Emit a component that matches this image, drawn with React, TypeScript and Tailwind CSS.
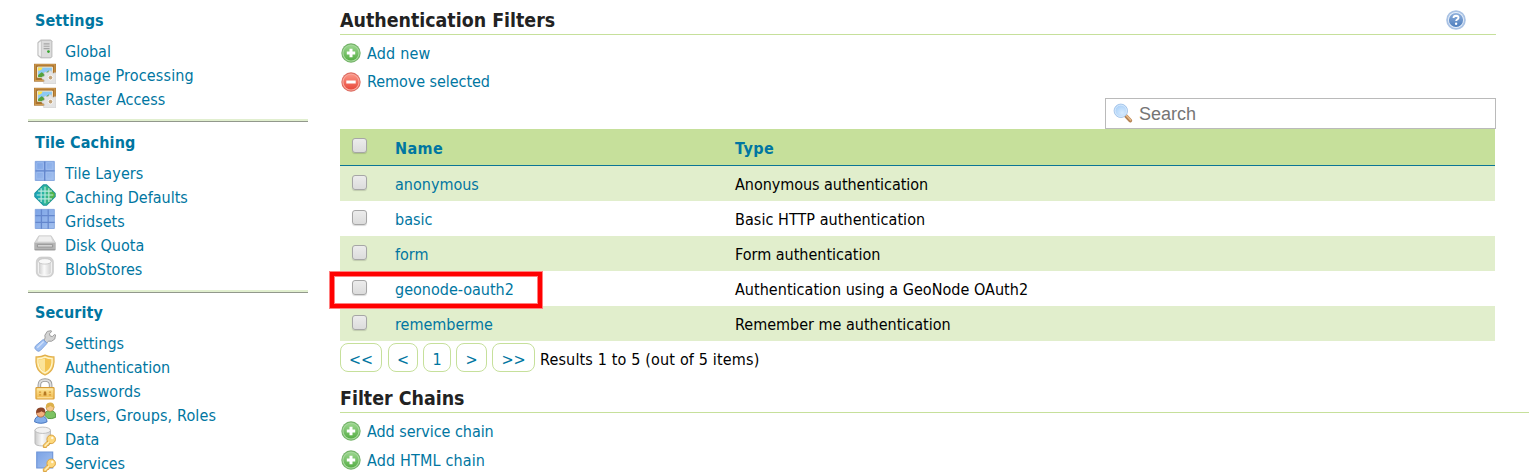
import React from "react";

type IconName =
  | "server" | "picture" | "tiles" | "cache" | "grid" | "disk" | "database"
  | "wrench" | "shield" | "lock" | "group" | "dataKey" | "serviceKey";

const Defs = () => (
  <svg width="0" height="0" className="absolute" aria-hidden="true">
    <defs>
      <linearGradient id="metal" x1="0" x2="1" y1="0" y2="0">
        <stop offset="0" stopColor="#c9c9c9" /><stop offset=".45" stopColor="#fafafa" /><stop offset="1" stopColor="#cfcfcf" />
      </linearGradient>
      <linearGradient id="blue" x1="0" x2="1" y1="0" y2="1">
        <stop offset="0" stopColor="#7ba3e6" /><stop offset="1" stopColor="#a3c0ee" />
      </linearGradient>
      <linearGradient id="gold" x1="0" x2="0" y1="0" y2="1">
        <stop offset="0" stopColor="#fde79b" /><stop offset="1" stopColor="#f0b84b" />
      </linearGradient>
      <linearGradient id="teal" x1="0" x2="1" y1="0" y2="0">
        <stop offset="0" stopColor="#17a3c0" /><stop offset=".5" stopColor="#2eb89c" /><stop offset="1" stopColor="#62b52c" />
      </linearGradient>
      <linearGradient id="green" x1="0" x2="0" y1="0" y2="1">
        <stop offset="0" stopColor="#9ad68d" /><stop offset="1" stopColor="#56ae45" />
      </linearGradient>
      <linearGradient id="red" x1="0" x2="0" y1="0" y2="1">
        <stop offset="0" stopColor="#fb9484" /><stop offset="1" stopColor="#e8493c" />
      </linearGradient>
      <linearGradient id="help" x1="0" x2="0" y1="0" y2="1">
        <stop offset="0" stopColor="#8fb0dc" /><stop offset="1" stopColor="#4c7dbd" />
      </linearGradient>
      <radialGradient id="lens" cx=".6" cy=".65" r=".6">
        <stop offset="0" stopColor="#d6ebff" /><stop offset="1" stopColor="#acd1f7" />
      </radialGradient>
    </defs>
  </svg>
);

const Key = () => (
  <g>
    <path d="M10.400 10.300 6.800 13.900v1.700h2.300l.5-1.300 1.200-.2.3-1.300 1.700-.6z" fill="#fbd57a" stroke="#d9a03c" strokeWidth=".7" strokeLinejoin="round" />
    <circle cx="12.500" cy="9.700" r="3.100" fill="#fdd87c" stroke="#d9a03c" strokeWidth=".7" />
    <path d="m8 14.600 3-3" stroke="#fff0c0" strokeWidth=".8" />
    <circle cx="13.300" cy="8.800" r=".9" fill="#fff8e4" />
  </g>
);

const drawings: Record<IconName, React.ReactNode> = {
  server: (
    <>
      <path d="M2.800 3.200 5 1.400h7.200l.9.900v11.300l-.9.900H5l-2.200-1.700z" fill="#c3c3c3" stroke="#b0b0b0" strokeWidth=".5" />
      <path d="M5.600 2h6.400q.6 0 .6.600v10.900q0 .5-.6.500H5.600z" fill="#dcdcdc" />
      <path d="M3.300 3.600 5 2.400v11.200l-1.700-1.200z" fill="#f4f4f4" />
      <path d="M7 4.200h4.300M7 6h4.300M7 7.800h4.300" stroke="#a5a5a5" strokeWidth=".9" />
      <circle cx="10.500" cy="9.900" r="1" fill="#35a52e" />
    </>
  ),
  picture: (
    <>
      <path d="M0 1.300h16v13H0z" fill="#a8722f" />
      <path d="M.8 2h14.400v11.500H.8z" fill="none" stroke="#d29d51" strokeWidth=".8" />
      <path d="M2.600 3.700h10.800v7.500H2.600z" fill="#8cc9f4" stroke="#f8efd9" strokeWidth=".7" />
      <path d="M3 4h3.200q-.2 2-3.200 2.400z" fill="#ffe34a" />
      <path d="M3 9.400 5.500 7.500 8 8.800 10.500 6.200 13 8v3H3z" fill="#55a23c" />
      <path d="M11.200 6.400h1.600l.4 1.400 1 .4 1.300-.6.5.6v7.400l-.8.4-8-.1-.4-.8.8-1.300-.3-.9-1.500-.5v-1.500l1.500-.5.4-1-.7-1.300 1.100-1 1.300.7 1-.4z" fill="#e4e4e4" stroke="#c6c6c6" strokeWidth=".4" />
      <circle cx="12" cy="11.400" r="1.700" fill="#c4a479" stroke="#fafafa" strokeWidth=".7" />
    </>
  ),
  tiles: (
    <>
      <path d="M.9 1h13.900v13.900H.9z" fill="url(#blue)" stroke="#7c9fdc" strokeWidth=".6" />
      <path d="M7.800 1v14M1 7.900h14" stroke="#6487cd" strokeWidth="1" />
      <path d="M2 2h4.800v4.800H2zM8.900 2h4.800v4.800H8.900zM2 9h4.800v4.800H2zM8.900 9h4.800v4.800H8.900z" fill="none" stroke="#a4c0f0" strokeWidth=".5" />
    </>
  ),
  cache: (
    <>
      <path d="M6.800.6h2.400l6.200 6.200v2.400l-6.200 6.200H6.800L.6 9.200V6.800z" fill="url(#teal)" stroke="#2597a0" strokeWidth=".8" strokeLinejoin="round" />
      <path d="M5.200 3v10M8 2v12M10.800 3v10M3 5.200h10M2 8h12M3 10.800h10" stroke="#bce9de" strokeWidth=".85" />
    </>
  ),
  grid: (
    <>
      <path d="M.9 1h13.900v13.900H.9z" fill="url(#blue)" stroke="#7c9fdc" strokeWidth=".6" />
      <path d="M5.400 1v14M10.300 1v14M1 5.600h14M1 10.400h14" stroke="#6487cd" strokeWidth=".9" />
    </>
  ),
  disk: (
    <>
      <path d="M3.500 2.800h9l3.100 5.100v4.500q0 .8-.8.800H1.200q-.8 0-.8-.8V7.900z" fill="#d9d9d9" stroke="#c2c2c2" strokeWidth=".5" />
      <path d="M3.900 3.300h8.200l1.300 3.600H2.600z" fill="#efefef" />
      <path d="M.5 7.900h15v4.500q0 .7-.7.700H1.200q-.7 0-.7-.7z" fill="#b4b4b4" />
      <path d="M2.500 9.200h11v1.700h-11z" fill="#dedede" stroke="#8e8e8e" strokeWidth=".6" />
      <path d="M.5 12.900h15" stroke="#929292" strokeWidth=".6" />
    </>
  ),
  database: (
    <>
      <rect x="1.700" y=".8" width="12.400" height="14.400" rx="3.500" fill="#d3d3d3" stroke="#c4c4c4" strokeWidth=".5" />
      <path d="M3.200 4v7.900q0 2.200 4.700 2.200t4.700-2.200V4z" fill="url(#metal)" stroke="#fff" strokeWidth=".6" />
      <ellipse cx="7.900" cy="3.900" rx="4.700" ry="2" fill="#f8f8f8" stroke="#bababa" strokeWidth=".5" />
    </>
  ),
  wrench: (
    <>
      <path d="m8.100 5.800-.2-2L9.700 1l2.800-.5.300.7-1.600 1.500.5 1.600 1.600.5 1.600-1.500.8.300-.6 3-2.400 1.600-2-.1-1.400 1.300-2-2.100z" fill="#d3d3d3" stroke="#999" strokeWidth=".7" />
      <path d="m6.700 6.900 2.800 2.800-4.800 5.100q-1.100 1-2.200.5L.8 13.600q-.5-1.100.5-2.200z" fill="#9fc0f2" stroke="#7b9fdb" strokeWidth=".7" />
      <path d="m2.400 12.900 4.600-4.500" stroke="#d0e0fa" strokeWidth="1" />
    </>
  ),
  shield: (
    <>
      <path d="M8 .8q3.200 1.600 6.500 1.300.4 4.100-.5 7-1.300 4.200-6 6.200-4.700-2-6-6.200-.9-2.900-.5-7Q4.800 2.400 8 .8z" fill="#f9dc83" stroke="#e2b04d" strokeWidth=".9" />
      <path d="M8 2.300q2.500 1.100 5.100 1.100.2 3.200-.5 5.300Q11.600 12 8 13.700 4.400 12 3.400 8.700 2.700 6.600 2.900 3.400 5.500 3.400 8 2.300z" fill="#f4c451" stroke="#fff4ca" strokeWidth=".9" />
      <path d="M8 3.200v9.900Q4.900 11.400 4 8.500 3.400 6.500 3.500 4 6 4 8 3.200z" fill="#fbe49a" />
    </>
  ),
  lock: (
    <>
      <path d="M3.900 7.600V5Q3.900 1.500 8 1.500T12.100 5v2.600" fill="none" stroke="#999" strokeWidth="2.600" />
      <path d="M3.900 7.600V5Q3.900 1.500 8 1.500T12.100 5v2.600" fill="none" stroke="#dedede" strokeWidth="1.300" />
      <rect x="1.400" y="7" width="13.200" height="8.300" rx=".6" fill="url(#gold)" stroke="#d79c36" strokeWidth=".8" />
      <path d="M2.400 8h11.200M2.400 14.400h11.200" stroke="#fff1be" strokeWidth=".6" />
      <path d="M3.600 10.300h1.600M3.600 12.300h1.600M10.800 10.300h1.600M10.800 12.300h1.600" stroke="#d79a35" strokeWidth=".8" />
      <path d="M7.200 9.900h1.600l.3 2.900H6.900z" fill="#b57923" />
    </>
  ),
  group: (
    <>
      <path d="M7.600 9.600q.2-3.300 4.100-3.300t4 3.200v1.700q-2.800 1.300-5.500.8z" fill="#7cc262" stroke="#488e37" strokeWidth=".6" />
      <circle cx="11.700" cy="3.900" r="2.900" fill="#f6c98e" stroke="#b98743" strokeWidth=".5" />
      <path d="M8.700 4.300Q8.300.4 11.600.3t3.200 3.800q-1.700 0-2.900-1.300-1.100 1.500-3.200 1.500z" fill="#dcb04a" />
      <path d="M.4 14.400q.1-4.200 4.500-4.200t4.600 4.200q-4.400 2.200-9.100 0z" fill="#82aeea" stroke="#4472bd" strokeWidth=".7" />
      <circle cx="4.900" cy="7.900" r="3.100" fill="#f4b07d" stroke="#9c5a31" strokeWidth=".5" />
      <path d="M1.600 8Q1.200 4.100 4.900 4t3.300 3.900Q6.400 7.700 5.500 6.700 4.200 8 1.600 8z" fill="#8b4528" />
    </>
  ),
  dataKey: (
    <>
      <path d="M.7 3v9.300q0 2.200 5.600 2.200t5.700-2.200V3z" fill="url(#metal)" stroke="#b3b3b3" strokeWidth=".6" />
      <ellipse cx="6.350" cy="3.100" rx="5.650" ry="2.300" fill="#f2f2f2" stroke="#b5b5b5" strokeWidth=".6" />
      <Key />
    </>
  ),
  serviceKey: (
    <>
      <path d="M2 1.500h11.600v11.600H2z" fill="url(#blue)" stroke="#6c93d8" strokeWidth=".8" />
      <Key />
    </>
  ),
};

const Icon = ({ name }: { name: IconName }) => (
  <svg viewBox="0 0 16 16" className="-mt-px size-[22px] shrink-0">{drawings[name]}</svg>
);

const RoundIcon = ({ kind }: { kind: "add" | "remove" }) => (
  <svg viewBox="0 0 20 20" className={kind === "add" ? "mb-0.5 size-5 shrink-0" : "size-5 shrink-0"}>
    <circle cx="10" cy="10" r="9.700" fill={kind === "add" ? "#74b368" : "#dd6d62"} />
    <circle cx="10" cy="10" r="8.600" fill={kind === "add" ? "#a9d99f" : "#f9a99e"} />
    <circle cx="10" cy="10" r="7.500" fill={kind === "add" ? "url(#green)" : "url(#red)"} />
    <path d={kind === "add" ? "M10 5.800v8.400M5.800 10h8.400" : "M5.300 10h9.400"} stroke="#fff" strokeWidth="3" />
  </svg>
);

const sections: { title: string; tracking: string; box: string; items: [IconName, string, string][] }[] = [
  {
    title: "Settings", tracking: "tracking-[0.1px]", box: "pt-2 pb-2",
    items: [
      ["server", "Global", "tracking-normal"],
      ["picture", "Image Processing", "tracking-[0.15px]"],
      ["picture", "Raster Access", "tracking-normal"],
    ],
  },
  {
    title: "Tile Caching", tracking: "tracking-[0.12px]", box: "pt-2 pb-[9px]",
    items: [
      ["tiles", "Tile Layers", "tracking-[0.1px]"],
      ["cache", "Caching Defaults", "tracking-normal"],
      ["grid", "Gridsets", "tracking-normal"],
      ["disk", "Disk Quota", "tracking-normal"],
      ["database", "BlobStores", "tracking-normal"],
    ],
  },
  {
    title: "Security", tracking: "tracking-[0.1px]", box: "pt-[7px]",
    items: [
      ["wrench", "Settings", "tracking-normal"],
      ["shield", "Authentication", "tracking-[-0.05px]"],
      ["lock", "Passwords", "tracking-[0.15px]"],
      ["group", "Users, Groups, Roles", "tracking-[0.14px]"],
      ["dataKey", "Data", "tracking-normal"],
      ["serviceKey", "Services", "tracking-[-0.1px]"],
    ],
  },
];

const rows: [string, string, string][] = [
  ["anonymous", "Anonymous authentication", "tracking-[-0.04px]"],
  ["basic", "Basic HTTP authentication", "tracking-[0.06px]"],
  ["form", "Form authentication", "tracking-normal"],
  ["geonode-oauth2", "Authentication using a GeoNode OAuth2", "tracking-[0.03px]"],
  ["rememberme", "Remember me authentication", "tracking-normal"],
];

const pages: [string, string][] = [
  ["<<", "w-[42px] mr-1.5"],
  ["<", "w-[30px] mr-[5px]"],
  ["1", "w-[28px] mr-[5px]"],
  [">", "w-[31px] mr-[5px]"],
  [">>", "w-[43px] mr-[5px]"],
];

const Checkbox = ({ offset }: { offset: string }) => (
  <span className={`ml-3 block size-[15px] shrink-0 rounded-[3px] border border-[#a6a6a6] bg-linear-to-b from-[#ececec] to-[#dcdcdc] shadow-[0_1px_1px_rgba(0,0,0,0.15)] ${offset}`} />
);

const Action = ({ kind, children }: { kind: "add" | "remove"; children: React.ReactNode }) => (
  <a className="flex h-6 items-center gap-1.5 pl-px text-[#0076a1]">
    <RoundIcon kind={kind} />
    <span>{children}</span>
  </a>
);

export default function App() {
  return (
    <div className="flex h-[473px] w-[1529px] overflow-hidden bg-white font-['DejaVu_Sans_Condensed','DejaVu_Sans',sans-serif] text-[16px] leading-6 text-black">
      <Defs />
      <nav className="ml-7 w-[280px] shrink-0 text-[#0076a1]">
        {sections.map((s, i) => (
          <React.Fragment key={s.title}>
            <section className={s.box}>
              <h3 className={`mb-[7px] h-6 pt-px pl-[7px] font-bold ${s.tracking}`}>{s.title}</h3>
              <ul>
                {s.items.map(([icon, label, tracking]) => (
                  <li key={label} className="flex h-6 gap-[9px] pl-1.5">
                    <Icon name={icon} />
                    <a className={`pt-px ${tracking}`}>{label}</a>
                  </li>
                ))}
              </ul>
            </section>
            {i < 2 && <div className="h-[3px] border-b border-[#92988c] bg-[#e1efcf]" />}
          </React.Fragment>
        ))}
      </nav>

      <main className="ml-8 flex min-w-0 flex-1 flex-col">
        <header className="flex h-[35px] w-[1156px] items-start justify-between border-b border-[#c6e09b] pt-2">
          <h2 className="pt-px text-[19.4px] font-bold text-[#222]">Authentication Filters</h2>
          <svg viewBox="0 0 20 20" className="mt-0.5 mr-[30px] size-5">
            <circle cx="10" cy="10" r="9.800" fill="#a9c2e4" />
            <circle cx="10" cy="10" r="8" fill="#e6effa" />
            <circle cx="10" cy="10" r="7.100" fill="url(#help)" />
            <path d="M7.500 8q.1-2.300 2.600-2.300 2.400.1 2.400 2 0 1.100-1.300 1.800-1 .6-1 1.500" fill="none" stroke="#fff" strokeWidth="1.900" />
            <circle cx="10.100" cy="13.700" r="1.200" fill="#fff" />
          </svg>
        </header>

        <div className="mt-[7px] flex flex-col gap-1">
          <Action kind="add"><span className="tracking-[0.2px]">Add new</span></Action>
          <Action kind="remove"><span className="tracking-[-0.05px]">Remove selected</span></Action>
        </div>

        <div className="mt-1 ml-[765px] flex h-[31px] w-[391px] items-center border border-[#bababa] bg-white pl-[7px] font-['Liberation_Sans',sans-serif] text-[18px] text-[#757575]">
          <svg viewBox="0 0 20 20" className="mr-1.5 mb-0.5 size-5">
            <path d="m13 13 4.200 4.500" stroke="#b58354" strokeWidth="3.800" strokeLinecap="round" />
            <path d="m13.600 12.700 4 4.300" stroke="#e8b987" strokeWidth="1.600" strokeLinecap="round" />
            <circle cx="7.800" cy="7.800" r="6.700" fill="url(#lens)" stroke="#a6c6ea" strokeWidth="1" />
            <circle cx="7.800" cy="7.800" r="5.700" fill="none" stroke="#d5e8fc" strokeWidth="1" />
          </svg>
          Search
        </div>

        <div className="relative w-[1155px]">
          <div className="flex h-[37px] items-center border-b border-[#0b7595] bg-[#c6e09b] pt-0.5 font-bold text-[#0076a1]">
            <Checkbox offset="mb-[5px]" />
            <span className="ml-7 w-[340px] pt-0.5 tracking-[0.4px]">Name</span>
            <span className="pt-0.5 tracking-[0.5px]">Type</span>
          </div>
          {rows.map(([name, type, tracking], i) => (
            <div key={name} className={`flex h-[35px] items-center pt-px ${i % 2 === 0 ? "bg-[#e1eecc]" : "bg-white"}`}>
              <Checkbox offset="mb-[3px]" />
              <a className="ml-7 w-[340px] pt-0.5 text-[#0076a1]">{name}</a>
              <span className={`pt-0.5 ${tracking}`}>{type}</span>
            </div>
          ))}
          <div className="absolute top-[142px] -left-[11px] h-[38px] w-[214px] border border-[#ff8080]">
            <div className="h-full border-4 border-[#ff0000]">
              <div className="h-full border border-[#ff8080]" />
            </div>
          </div>
        </div>

        <div className="mt-0.5 flex h-[29px] items-center">
          {pages.map(([label, size]) => (
            <a key={label} className={`flex h-[29px] shrink-0 items-center justify-center rounded-lg border border-[#c6e09b] pt-1 text-[#0076a1] ${size}`}>
              {label}
            </a>
          ))}
          <span className="pt-1 tracking-[0.16px]">Results 1 to 5 (out of 5 items)</span>
        </div>

        <h2 className="mt-[14px] h-[27px] border-b border-[#c6e09b] pt-px text-[19.4px] font-bold text-[#222]">Filter Chains</h2>
        <div className="mt-[7px] flex flex-col gap-[5px]">
          <Action kind="add"><span className="tracking-[-0.05px]">Add service chain</span></Action>
          <Action kind="add"><span className="tracking-[0.15px]">Add HTML chain</span></Action>
        </div>
      </main>
    </div>
  );
}
